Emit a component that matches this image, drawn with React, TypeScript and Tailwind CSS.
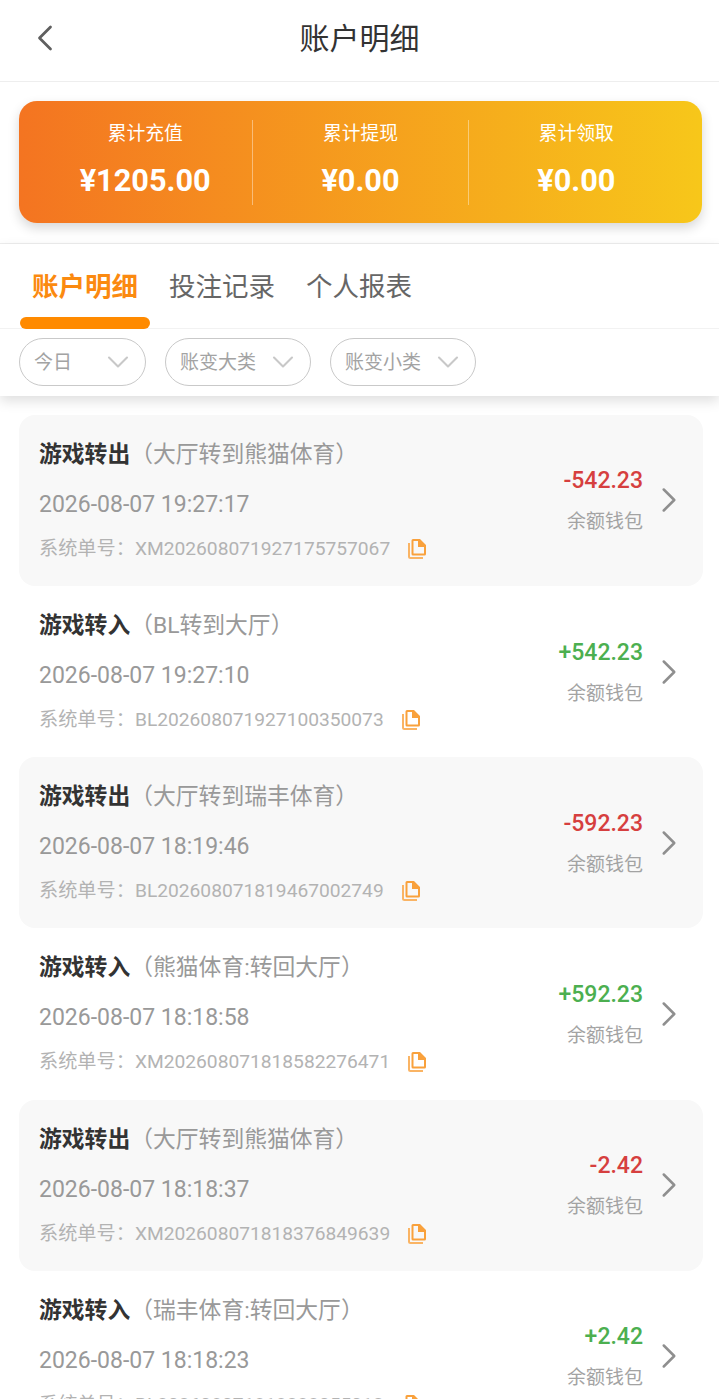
import React from 'react';
import { ChevronDown, ChevronLeft, ChevronRight } from 'lucide-react';

const font = "font-['Roboto','Noto_Sans_CJK_SC',sans-serif]";

const totals = [
  { label: '累计充值', value: '¥1205.00' },
  { label: '累计提现', value: '¥0.00' },
  { label: '累计领取', value: '¥0.00' },
];

const records = [
  { title: '游戏转出', note: '（大厅转到熊猫体育）', time: '2026-08-07 19:27:17', order: 'XM202608071927175757067', amount: '-542.23' },
  { title: '游戏转入', note: '（BL转到大厅）', time: '2026-08-07 19:27:10', order: 'BL202608071927100350073', amount: '+542.23' },
  { title: '游戏转出', note: '（大厅转到瑞丰体育）', time: '2026-08-07 18:19:46', order: 'BL202608071819467002749', amount: '-592.23' },
  { title: '游戏转入', note: '（熊猫体育:转回大厅）', time: '2026-08-07 18:18:58', order: 'XM202608071818582276471', amount: '+592.23' },
  { title: '游戏转出', note: '（大厅转到熊猫体育）', time: '2026-08-07 18:18:37', order: 'XM202608071818376849639', amount: '-2.42' },
  { title: '游戏转入', note: '（瑞丰体育:转回大厅）', time: '2026-08-07 18:18:23', order: 'BL202608071818233055012', amount: '+2.42' },
];

function CopyIcon() {
  return (
    <svg width="18" height="20" viewBox="0 0 18 20" className="ml-[18px] shrink-0">
      <path
        fillRule="evenodd"
        d="M5 0h7l6 6v9a1.5 1.5 0 0 1-1.5 1.5H5A1.5 1.5 0 0 1 3.500 15V1.500A1.500 1.500 0 0 1 5 0zM5.500 2v12.500H16V8h-6V2z"
        fill="#f9a13c"
      />
      <path d="M1 4v13.500A1.500 1.500 0 0 0 2.500 19H15" fill="none" stroke="#fab464" strokeWidth="2" />
    </svg>
  );
}

function Filter({ label, width }: { label: string; width: string }) {
  return (
    <div className={`${width} h-[48px] rounded-full border border-[#c9c9c9] flex items-center justify-between pl-[14px] pr-[9px] text-[19px] text-[#a3a3a3]`}>
      <span className="mt-[2px]">{label}</span>
      <ChevronDown size={36} strokeWidth={1.4} className="text-[#c8c8c8] -my-2" />
    </div>
  );
}

export default function App() {
  return (
    <div className={`${font} w-[719px] h-[1399px] overflow-hidden bg-white`}>
      <header className="relative h-[82px] pb-1 border-b border-[#eeeeee] flex items-center justify-center">
        <ChevronLeft size={44} strokeWidth={1.5} className="absolute left-[23px] top-[16px] text-[#5f5f5f]" />
        <h1 className="text-[30px] font-normal text-[#333333]">账户明细</h1>
      </header>

      <div className="pl-[19px] pr-[17px] pt-[19px] pb-[20px] border-b border-[#eeeeee]">
        <div className="h-[122px] pl-[19px] pr-[18px] rounded-[18px] bg-linear-to-r/srgb from-[#f47421] to-[#f7c71a] shadow-[0_5px_12px_rgba(0,0,0,0.16)] grid grid-cols-3 items-center">
          {totals.map((t, i) => (
            <div key={t.label} className={`h-[85px] flex flex-col items-center text-white ${i < 2 ? 'border-r border-white/40' : ''}`}>
              <span className="mt-[1px] text-[18.750px] leading-[26px]">{t.label}</span>
              <span className="mt-[15px] text-[30.700px] leading-[38px] font-bold">{t.value}</span>
            </div>
          ))}
        </div>
      </div>

      <div className="relative z-10 bg-white shadow-[0_5px_12px_rgba(0,0,0,0.13)]">
        <div className="relative h-[85px] border-b border-[#f2f2f2] flex items-start pt-[24px] pl-[32px] gap-[31px] text-[26.500px] leading-[38px] text-[#666666]">
          <span className="font-bold text-[#fb8a10]">账户明细</span>
          <span>投注记录</span>
          <span>个人报表</span>
          <div className="absolute left-[20px] top-[73px] w-[130px] h-[12px] rounded-full bg-[#ff8a00]" />
        </div>
        <div className="h-[67px] pt-[9px] pl-[19px] flex items-start gap-[19px]">
          <Filter label="今日" width="w-[127px]" />
          <Filter label="账变大类" width="w-[146px]" />
          <Filter label="账变小类" width="w-[146px]" />
        </div>
      </div>

      <div className="pt-[18.800px] pl-[19px] pr-[16px]">
        {records.map((r, i) => (
          <div key={r.time} className={`h-[171.200px] rounded-[16px] flex items-center pl-[20px] pr-[13px] ${i % 2 === 0 ? 'bg-[#f8f8f8]' : ''}`}>
            <div className="flex-1 min-w-0">
              <div className="text-[22.800px] leading-[32px] text-[#999999] whitespace-nowrap">
                <span className="font-bold text-[#333333]">{r.title}</span>
                {r.note}
              </div>
              <div className="mt-[18px] text-[23px] leading-[32px] text-[#999999]">{r.time}</div>
              <div className="mt-[15px] flex items-center text-[19.200px] leading-[26px] text-[#b3b3b3] whitespace-nowrap">
                <span>系统单号：{r.order}</span>
                <CopyIcon />
              </div>
            </div>
            <div className="flex flex-col items-end mt-[1px]">
              <span className={`text-[23px] leading-[32px] font-medium ${r.amount.startsWith('-') ? 'text-[#d63f3f]' : 'text-[#4caf50]'}`}>{r.amount}</span>
              <span className="mt-[11px] text-[19px] leading-[28px] text-[#a3a3a3]">余额钱包</span>
            </div>
            <ChevronRight size={42} strokeWidth={1.45} className="ml-[5px] text-[#8f8f8f]" />
          </div>
        ))}
      </div>
    </div>
  );
}
